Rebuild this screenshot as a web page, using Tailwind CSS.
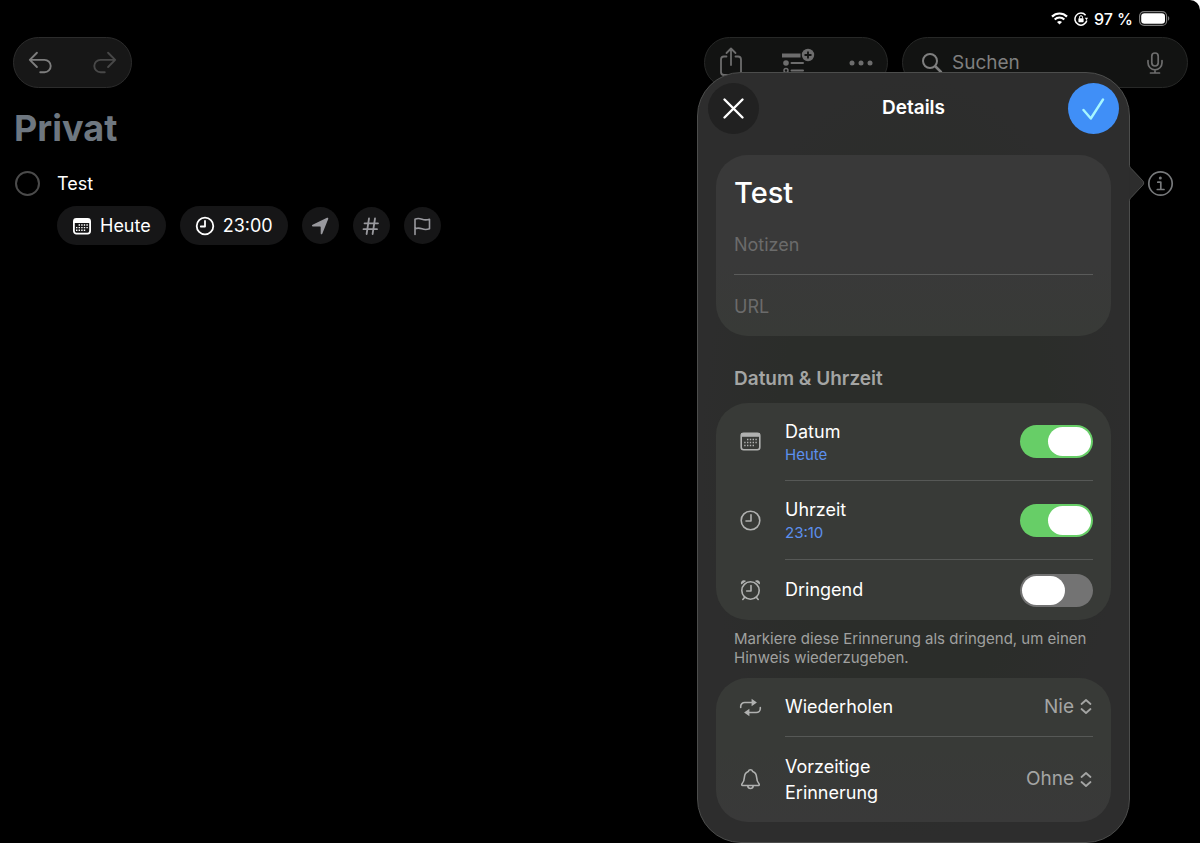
<!DOCTYPE html>
<html lang="de">
<head>
    <meta charset="UTF-8">
    <meta name="viewport" content="width=device-width, initial-scale=1.0">
    <title>Privat – Erinnerungen</title>

    <!-- Tailwind CSS for styling -->
    <script src="https://cdn.jsdelivr.net/npm/@tailwindcss/browser@4"></script>
</head>
<body class="bg-white">
    <div class="relative min-h-screen rounded-tr-[10px] bg-black font-['Inter',sans-serif] text-white">

        <!-- Status bar -->
        <div class="flex h-[37px] items-center justify-end gap-[6px] pr-[30px] text-base font-medium">
            <svg class="h-[13px] w-[17px]" viewBox="0 0 17 13" fill="none" stroke="currentColor" stroke-width="2.2">
                <path d="M1 4.6a10.6 10.6 0 0 1 15 0"/>
                <path d="M3.7 7.5a6.8 6.8 0 0 1 9.6 0"/>
                <path d="M8.5 12.6 6 10.1a3.6 3.6 0 0 1 5 0z" fill="currentColor" stroke="none"/>
            </svg>
            <svg class="h-[14px] w-[14px]" viewBox="0 0 14 14" fill="none" stroke="currentColor" stroke-width="1.5">
                <path d="M11.6 3.3A6 6 0 1 0 12.8 8.5"/>
                <path d="M10.8 5.7h3.2l-1.5 2.6z" fill="currentColor" stroke="none"/>
                <rect x="4.4" y="6.2" width="5.2" height="4" rx=".6" fill="currentColor" stroke="none"/>
                <path d="M5.5 6.5V5.2a1.5 1.5 0 0 1 3 0v1.3" stroke-width="1"/>
            </svg>
            <span>97 %</span>
            <svg class="h-[15px] w-[31px]" viewBox="0 0 31 15" fill="none">
                <rect x=".6" y=".6" width="27" height="13.8" rx="4.5" stroke="#7b7b7b" stroke-width="1.2"/>
                <rect x="2.2" y="2.2" width="23.8" height="10.6" rx="3.2" fill="#fff"/>
                <path d="M29 5.3c1.7.6 1.7 3.8 0 4.4z" fill="#7b7b7b"/>
            </svg>
        </div>

        <!-- Toolbar -->
        <header class="flex gap-[14px] pl-[13px] pr-3">
            <div class="flex h-[51px] items-center gap-[33px] rounded-full border border-[#2c2c2c] bg-[#171717] px-3">
                <button type="button" aria-label="Widerrufen" class="text-[#7d7d7d]">
                    <svg class="h-[30px] w-[30px]" viewBox="0 0 30 30" fill="none" stroke="currentColor" stroke-width="2" stroke-linecap="round" stroke-linejoin="round">
                        <path d="M11.5 5.500 4 13l7.500 7.500M4 13h15.500a6.500 6.500 0 0 1 0 13H15" transform="translate(0 -.5) scale(.95)"/>
                    </svg>
                </button>
                <button type="button" aria-label="Wiederholen" class="text-[#484848]">
                    <svg class="h-[30px] w-[30px]" viewBox="0 0 30 30" fill="none" stroke="currentColor" stroke-width="2" stroke-linecap="round" stroke-linejoin="round">
                        <path d="M11.5 5.500 4 13l7.500 7.500M4 13h15.500a6.500 6.500 0 0 1 0 13H15" transform="translate(30 -.5) scale(-.95 .95)"/>
                    </svg>
                </button>
            </div>
            <div class="ml-auto flex h-[51px] w-[184px] items-center justify-between rounded-full border border-[#272827] bg-[#121312] px-3 text-[#6d6d6d]">
                <button type="button" aria-label="Teilen">
                    <svg class="h-[32px] w-[28px]" viewBox="0 0 28 32" fill="none" stroke="currentColor" stroke-width="1.8" stroke-linecap="round" stroke-linejoin="round">
                        <path d="M9.500 9.500H7a3 3 0 0 0-3 3V25a3 3 0 0 0 3 3h14a3 3 0 0 0 3-3V12.500a3 3 0 0 0-3-3h-2.500M14 18V1.500M9.500 6 14 1.500 18.500 6"/>
                    </svg>
                </button>
                <button type="button" aria-label="Abschnitt hinzufügen">
                    <svg class="h-[32px] w-[38px]" viewBox="-4 0 38 32" fill="none" stroke="currentColor" stroke-width="2">
                        <path d="M1 8.500h18.500" stroke-width="4"/>
                        <circle cx="27" cy="8" r="6.200" fill="currentColor" stroke="none"/>
                        <path d="M27 4.500v7M23.500 8h7" stroke="#121312" stroke-width="1.800"/>
                        <circle cx="5" cy="16" r="2.800" fill="currentColor" stroke="none"/>
                        <circle cx="5" cy="23.500" r="2" stroke-width="1.500"/>
                        <path d="M10.500 16H22M10.500 23.500H22" stroke-linecap="round"/>
                    </svg>
                </button>
                <button type="button" aria-label="Mehr">
                    <svg class="h-[30px] w-[28px]" viewBox="0 0 28 30" fill="currentColor">
                        <circle cx="5" cy="15" r="2.500"/>
                        <circle cx="14" cy="15" r="2.500"/>
                        <circle cx="23" cy="15" r="2.500"/>
                    </svg>
                </button>
            </div>
            <label class="flex h-[51px] w-[286px] items-center gap-[9px] rounded-full border border-[#272827] bg-[#121312] pl-[18px] pr-5 text-[#7f7f7f]">
                <svg class="h-[22px] w-[22px] shrink-0" viewBox="0 0 22 22" fill="none" stroke="currentColor" stroke-width="2" stroke-linecap="round">
                    <circle cx="9" cy="9" r="7"/>
                    <path d="m14.500 14.500 5.500 5.500" stroke-width="2.500"/>
                </svg>
                <input type="search" aria-label="Suchen" placeholder="Suchen" class="h-[30px] min-w-0 flex-1 bg-transparent text-[19px] outline-none placeholder:text-[#7f7f7f]">
                <button type="button" aria-label="Diktieren" class="text-[#6d6d6d]">
                    <svg class="h-[24px] w-[24px]" viewBox="0 0 24 24" fill="none" stroke="currentColor" stroke-width="1.700" stroke-linecap="round">
                        <rect x="8.800" y="2" width="6.400" height="13" rx="3.200"/>
                        <path d="M5 9.500v2.300a7 7 0 0 0 14 0V9.500M12 18.800V22M7.500 22h9"/>
                    </svg>
                </button>
            </label>
        </header>

        <!-- Reminder list -->
        <main class="px-[14px] pt-[18px]">
            <h1 class="text-[36px] font-bold leading-[44px] text-[#6e7780]">Privat</h1>
            <div class="mt-5 flex items-center">
                <input type="checkbox" aria-label="Test erledigt" class="ml-[1px] h-[25px] w-[25px] appearance-none rounded-full border-2 border-[#4b4b4b]">
                <span class="ml-[17px] text-[18px] leading-[26px]">Test</span>
                <button type="button" aria-label="Info" class="ml-auto mr-3 text-[#77797b]">
                    <svg class="h-[27px] w-[27px]" viewBox="0 0 27 27" fill="none" stroke="currentColor" stroke-width="1.700">
                        <circle cx="13.500" cy="13.500" r="11.700"/>
                        <circle cx="13.300" cy="8" r="1.500" fill="currentColor" stroke="none"/>
                        <path d="M10.800 12.200h3v7M10.300 19.500h6.700" stroke-linecap="round" stroke-linejoin="round"/>
                    </svg>
                </button>
            </div>
            <div class="ml-[43px] mt-[9px] flex items-center gap-[14px] text-[18px]">
                <button type="button" class="flex h-[39px] items-center gap-2 rounded-full bg-[#161617] px-[15px]">
                    <svg class="h-5 w-5" viewBox="0 0 20 20" fill="none" stroke="currentColor">
                        <rect x="1.900" y="2.900" width="16.200" height="14.700" rx="2.500" stroke-width="1.800"/>
                        <path d="M2 5h16" stroke-width="4"/>
                        <path d="M6.600 9h9.600M4 11.600h12.200M4 14.200h9.600" stroke-width="1.400" stroke-dasharray="1.400 1.200"/>
                    </svg>
                    Heute
                </button>
                <button type="button" class="flex h-[39px] items-center gap-2 rounded-full bg-[#161617] px-[15px]">
                    <svg class="h-5 w-5" viewBox="0 0 20 20" fill="none" stroke="currentColor" stroke-width="1.800" stroke-linecap="round" stroke-linejoin="round">
                        <circle cx="10" cy="10" r="8.300"/>
                        <path d="M10 5v5.500H5.800"/>
                    </svg>
                    23:00
                </button>
                <button type="button" aria-label="Ort" class="flex h-[37px] w-[37px] items-center justify-center rounded-full bg-[#161617] text-[#98989d]">
                    <svg class="h-5 w-5" viewBox="0 0 20 20" fill="currentColor">
                        <path d="M18.200 3 12.300 17.700c-.4 1-1.600.8-1.600-.3V11.200c0-.4-.2-.6-.6-.6H3c-1.300 0-1.500-1.300-.4-1.800L17 1.800c.9-.4 1.600.3 1.200 1.200z"/>
                    </svg>
                </button>
                <button type="button" aria-label="Tag" class="flex h-[37px] w-[37px] items-center justify-center rounded-full bg-[#161617] text-[#98989d]">
                    <svg class="h-5 w-5" viewBox="0 0 20 20" fill="none" stroke="currentColor" stroke-width="1.800" stroke-linecap="round">
                        <path d="M8 2.500 5.600 18M14 2.500 11.600 18M3.500 7.300h13.500M2.500 13.200h13.500"/>
                    </svg>
                </button>
                <button type="button" aria-label="Markieren" class="flex h-[37px] w-[37px] items-center justify-center rounded-full bg-[#161617] text-[#98989d]">
                    <svg class="h-5 w-5" viewBox="0 0 20 20" fill="none" stroke="currentColor" stroke-width="1.600" stroke-linecap="round" stroke-linejoin="round">
                        <path d="M3 18.500V3.200c2.500-1.200 4.800-.8 7 0s4.500 1 7.500 0v9.600c-3 1-5.300.8-7.500 0s-4.500-1.200-7 0"/>
                    </svg>
                </button>
            </div>
        </main>

        <!-- Details popover -->
        <form aria-label="Details" class="absolute right-[70px] top-[72px] w-[433px] rounded-[44px] border border-[#4c4d4c] bg-[radial-gradient(ellipse_at_center,#2b2d2a_45%,#2d2d2d_70%)] px-[18px] pb-5 pt-[10px] text-[18px]">
            <svg class="absolute -right-[16px] top-[92px] h-[36px] w-[17px]" viewBox="0 0 17 36" fill="#2d2d2d" stroke="#4c4d4c">
                <path d="M1 0 1.500 1c.3 1 .8 1.600 1.500 2.300L14.800 15.800c1.200 1.300 1.200 3 0 4.300L3 32.700c-.7.700-1.200 1.300-1.500 2.300L1 36" />
                <path d="M.5 0v36" stroke="#2d2d2d" stroke-width="1.500"/>
            </svg>

            <div class="-mx-2 flex items-center justify-between">
                <button type="button" aria-label="Schließen" class="flex h-[51px] w-[51px] items-center justify-center rounded-full bg-[#212121]">
                    <svg class="h-6 w-6" viewBox="0 0 24 24" stroke="currentColor" stroke-width="2.400" stroke-linecap="round">
                        <path d="m2.500 2.500 18 18M20.500 2.500l-18 18"/>
                    </svg>
                </button>
                <h2 class="text-[19px] font-semibold">Details</h2>
                <button type="submit" aria-label="Fertig" class="flex h-[51px] w-[51px] items-center justify-center rounded-full bg-[#408ff7] text-[#a6f6ff]">
                    <svg class="h-6 w-6" viewBox="0 0 24 24" fill="none" stroke="currentColor" stroke-width="2.400" stroke-linecap="round" stroke-linejoin="round">
                        <path d="M1.500 13 8.800 21.500 21 2.500"/>
                    </svg>
                </button>
            </div>

            <div class="mt-[21px] rounded-[32px] bg-[linear-gradient(#393939_60%,#383a37)] px-[18px] pb-[14px] pt-[18px]">
                <input type="text" aria-label="Titel" value="Test" class="block h-10 w-full bg-transparent text-[29px] font-medium outline-none">
                <input type="text" aria-label="Notizen" placeholder="Notizen" class="mt-[15px] block h-8 w-full bg-transparent outline-none placeholder:text-[#6b6b6b]">
                <hr class="mt-[14px] border-[#5a5b5a]">
                <input type="url" aria-label="URL" placeholder="URL" class="mt-[15px] block h-8 w-full bg-transparent outline-none placeholder:text-[#6b6b6b]">
            </div>

            <h3 class="mt-[30px] px-[18px] text-[19px] font-semibold leading-[26px] text-[#a4a5a4]">Datum &amp; Uhrzeit</h3>

            <div class="mt-[11px] rounded-[32px] bg-[#383a37] pl-[18px]">
                <div class="flex items-center">
                    <svg class="h-[24px] w-[32px] text-[#b0b1b0]" viewBox="0 0 32 24" fill="none" stroke="currentColor">
                        <rect x="7.200" y="3.200" width="18.600" height="16.600" rx="2.500" stroke-width="1.600"/>
                        <path d="M7 5h19" stroke-width="3.600"/>
                        <path d="M13 9.500h9.800M10.200 12.500h12.600M10.200 15.500h9.800" stroke-width="1.400" stroke-dasharray="1.400 1.400"/>
                    </svg>
                    <div class="ml-[19px] mr-[18px] flex h-[78px] flex-1 items-center justify-between border-b border-[#565856]">
                        <label for="datum" class="leading-[26px]">Datum<span class="block text-[15px] leading-5 text-[#5c90ee]">Heute</span></label>
                        <input type="checkbox" role="switch" id="datum" checked class="h-[33px] w-[73px] appearance-none rounded-full bg-[#737373] p-[2px] before:block before:h-[29px] before:w-[43px] before:rounded-full before:bg-white checked:bg-[#67ce67] checked:before:ml-[26px]">
                    </div>
                </div>
                <div class="flex items-center">
                    <svg class="h-[24px] w-[32px] text-[#b0b1b0]" viewBox="0 0 32 24" fill="none" stroke="currentColor" stroke-width="1.600" stroke-linecap="round" stroke-linejoin="round">
                        <circle cx="16.500" cy="11.500" r="9.300"/>
                        <path d="M17 5.800V12h-5"/>
                    </svg>
                    <div class="ml-[19px] mr-[18px] flex h-[79px] flex-1 items-center justify-between border-b border-[#565856]">
                        <label for="uhrzeit" class="leading-[26px]">Uhrzeit<span class="block text-[15px] leading-5 text-[#5c90ee]">23:10</span></label>
                        <input type="checkbox" role="switch" id="uhrzeit" checked class="h-[33px] w-[73px] appearance-none rounded-full bg-[#737373] p-[2px] before:block before:h-[29px] before:w-[43px] before:rounded-full before:bg-white checked:bg-[#67ce67] checked:before:ml-[26px]">
                    </div>
                </div>
                <div class="flex items-center">
                    <svg class="h-[24px] w-[32px] text-[#b0b1b0]" viewBox="0 0 32 24" fill="none" stroke="currentColor" stroke-width="1.600" stroke-linecap="round" stroke-linejoin="round">
                        <circle cx="16.500" cy="12.500" r="8.700"/>
                        <path d="M17 7.500V13h-4.300M10.500 19.500l-1.700 2M22.500 19.500l1.700 2"/>
                        <path d="M7.300 6.600c-1.500-2.800 2-5.600 4.800-3.700zM25.700 6.600c1.500-2.800-2-5.600-4.800-3.700z" fill="currentColor" stroke="none"/>
                    </svg>
                    <div class="ml-[19px] mr-[18px] flex h-[60px] flex-1 items-center justify-between">
                        <label for="dringend" class="leading-[26px]">Dringend</label>
                        <input type="checkbox" role="switch" id="dringend" class="h-[33px] w-[73px] appearance-none rounded-full bg-[#737373] p-[2px] before:block before:h-[29px] before:w-[43px] before:rounded-full before:bg-white checked:bg-[#67ce67] checked:before:ml-[26px]">
                    </div>
                </div>
            </div>

            <p class="mt-[9px] px-[18px] text-[15px] leading-[19px] text-[#a0a1a0]">Markiere diese Erinnerung als dringend, um einen Hinweis wiederzugeben.</p>

            <div class="mt-[11px] rounded-[32px] bg-[linear-gradient(#383a37_50%,#393939)] pl-[18px]">
                <div class="flex items-center">
                    <svg class="h-[24px] w-[32px] text-[#b0b1b0]" viewBox="0 0 32 24" fill="none" stroke="currentColor" stroke-width="1.600" stroke-linecap="round">
                        <path d="M6.700 11.500v-1a4 4 0 0 1 4-4H18M26.300 11.500v1a4 4 0 0 1-4 4h-7.500"/>
                        <path d="M17.600 2.700v7.600L22.900 6.500zM15.400 12.700v7.600L10.100 16.500z" fill="currentColor" stroke="none"/>
                    </svg>
                    <div class="ml-[19px] mr-[18px] flex h-[59px] flex-1 items-center justify-between border-b border-[#565856]">
                        <label for="wiederholen" class="leading-[26px]">Wiederholen</label>
                        <span class="flex items-center gap-[5px] text-[19px] text-[#a4a5a4]">
                            <select id="wiederholen" class="appearance-none bg-transparent text-right outline-none">
                                <option>Nie</option>
                            </select>
                            <svg class="h-[18px] w-[14px]" viewBox="0 0 14 18" fill="none" stroke="currentColor" stroke-width="1.800" stroke-linecap="round" stroke-linejoin="round">
                                <path d="M2.500 6 7 2l4.500 4M2.500 11 7 15l4.500-4"/>
                            </svg>
                        </span>
                    </div>
                </div>
                <div class="flex items-center">
                    <svg class="h-[24px] w-[32px] text-[#b0b1b0]" viewBox="0 0 32 24" fill="none" stroke="currentColor" stroke-width="1.600" stroke-linecap="round" stroke-linejoin="round">
                        <path d="M8.700 17.500h15.600c1.200 0 1.200-1.200.5-2-1.600-1.700-2-2.900-2.200-6.200-.2-3.400-1.500-5.100-3.900-5.900-.7-2.300-3.700-2.300-4.400 0-2.400.8-3.700 2.500-3.900 5.900-.2 3.300-.6 4.500-2.200 6.200-.7.800-.7 2 .5 2zM13.800 18c.3 3.400 5.100 3.400 5.400 0"/>
                    </svg>
                    <div class="ml-[19px] mr-[18px] flex h-[85px] flex-1 items-center justify-between">
                        <label for="vorzeitig" class="w-[120px] leading-[26px]">Vorzeitige Erinnerung</label>
                        <span class="flex items-center gap-[5px] text-[19px] text-[#a4a5a4]">
                            <select id="vorzeitig" class="appearance-none bg-transparent text-right outline-none">
                                <option>Ohne</option>
                            </select>
                            <svg class="h-[18px] w-[14px]" viewBox="0 0 14 18" fill="none" stroke="currentColor" stroke-width="1.800" stroke-linecap="round" stroke-linejoin="round">
                                <path d="M2.500 6 7 2l4.500 4M2.500 11 7 15l4.500-4"/>
                            </svg>
                        </span>
                    </div>
                </div>
            </div>
        </form>
    </div>
</body>
</html>
